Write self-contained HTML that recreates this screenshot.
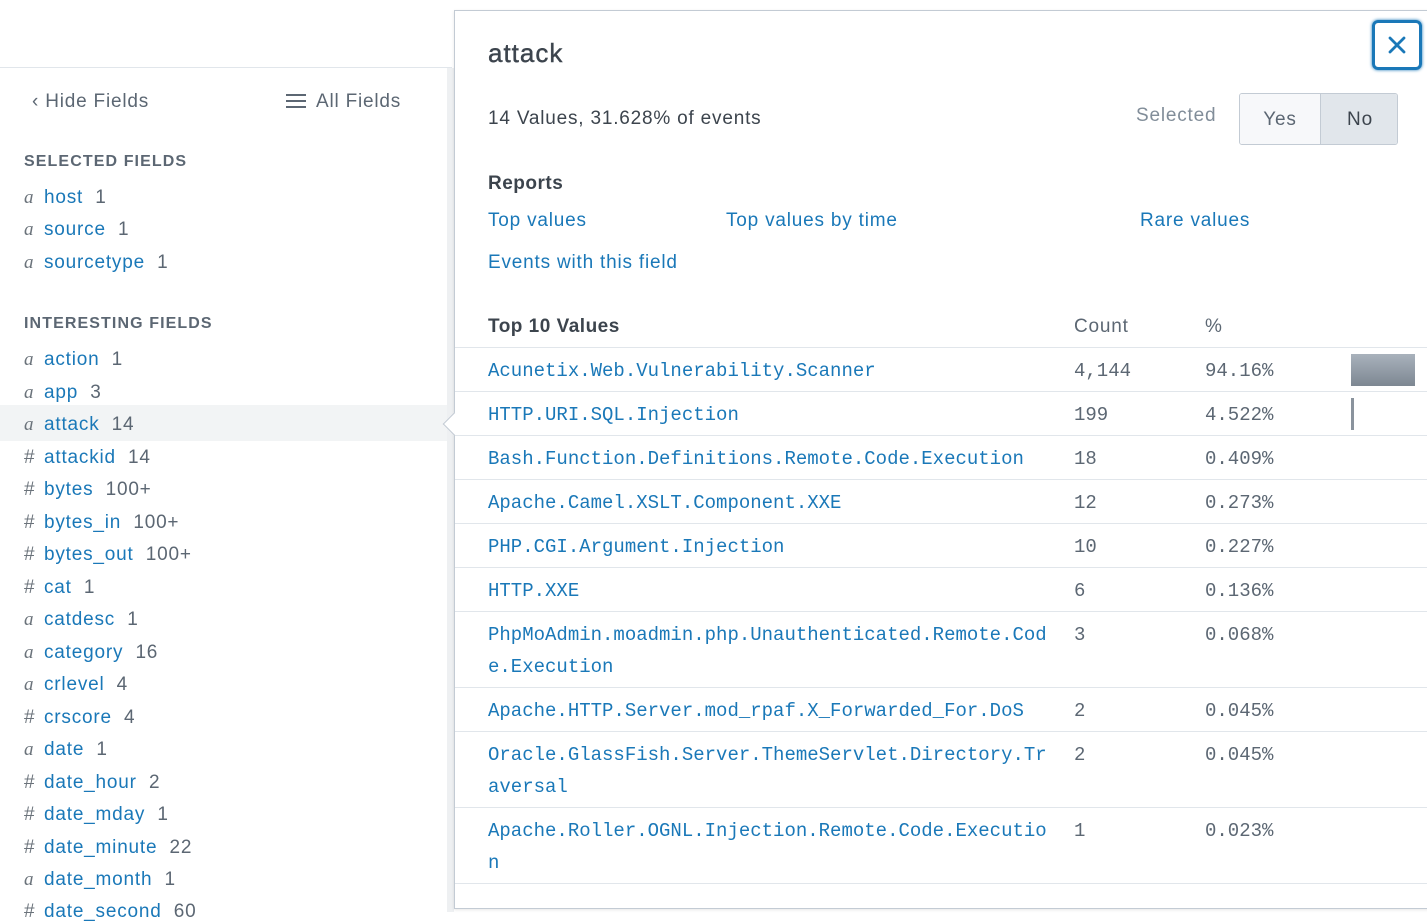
<!DOCTYPE html>
<html><head><meta charset="utf-8"><style>
*{margin:0;padding:0;box-sizing:border-box}
body{width:1427px;height:912px;overflow:hidden;background:#fff;font-family:"Liberation Sans",sans-serif;position:relative;color:#3c444d;letter-spacing:0.8px}
.a{position:absolute;white-space:nowrap}
.topline{position:absolute;left:0;top:67px;width:452px;height:1px;background:#e1e6eb}
.strip{position:absolute;left:447px;top:68px;width:7px;height:844px;background:#eef0f2}
.lnk{color:#1a78b8}
.L{position:absolute;left:0;top:3px;width:447px;height:912px}
.fld{position:absolute;left:24px;font-size:19px;white-space:nowrap;color:#5c6773}
.fld i{font-family:"Liberation Serif",serif;font-style:italic;color:#6b737b;display:inline-block;width:20px}
.fld i.h{font-family:"Liberation Sans",sans-serif;font-style:normal}
.fld b{font-weight:normal;color:#1a78b8}
.hdr{position:absolute;left:24px;font-size:16px;font-weight:bold;color:#5c6773;letter-spacing:1.1px}
.panel{position:absolute;left:454px;top:10px;width:990px;height:899px;border:1px solid #c3cbd4;background:#fff;box-shadow:0 1px 3px rgba(0,0,0,.1)}
.mono{font-family:"Liberation Mono",monospace;font-size:19px;color:#5c6773;letter-spacing:0}
.row{position:absolute;left:0;width:990px;border-top:1px solid #e1e6eb}
.val{position:absolute;left:33px;top:7px;width:562px;white-space:normal;word-break:break-all;line-height:32px;color:#1a78b8}
.cnt{position:absolute;left:619px;top:7px;line-height:32px}
.pct{position:absolute;left:750px;top:7px;line-height:32px}
</style></head><body>
<div class="topline"></div>
<div class="strip"></div>
<div style="position:absolute;left:0;top:405px;width:447px;height:36px;background:#f2f4f5"></div>
<div class="L">
<div class="a" style="left:32px;top:88px;font-size:19px;color:#5c6773">&#8249; Hide Fields</div>
<div class="a" style="left:286px;top:88px;font-size:19px;color:#5c6773"><span style="display:inline-block;width:20px;height:14px;vertical-align:-1px;background:linear-gradient(#5c6773 0 2px,transparent 2px 6px,#5c6773 6px 8px,transparent 8px 12px,#5c6773 12px 14px);margin-right:10px"></span>All Fields</div>
<div class="hdr" style="top:150px">SELECTED FIELDS</div>
<div class="fld" style="top:184px"><i>a</i><b>host</b>&nbsp; 1</div>
<div class="fld" style="top:216px"><i>a</i><b>source</b>&nbsp; 1</div>
<div class="fld" style="top:249px"><i>a</i><b>sourcetype</b>&nbsp; 1</div>
<div class="hdr" style="top:312px">INTERESTING FIELDS</div>
<div class="fld" style="top:346px"><i>a</i><b>action</b>&nbsp; 1</div>
<div class="fld" style="top:379px"><i>a</i><b>app</b>&nbsp; 3</div>
<div class="fld" style="top:411px"><i>a</i><b>attack</b>&nbsp; 14</div>
<div class="fld" style="top:444px"><i class="h">#</i><b>attackid</b>&nbsp; 14</div>
<div class="fld" style="top:476px"><i class="h">#</i><b>bytes</b>&nbsp; 100+</div>
<div class="fld" style="top:509px"><i class="h">#</i><b>bytes_in</b>&nbsp; 100+</div>
<div class="fld" style="top:541px"><i class="h">#</i><b>bytes_out</b>&nbsp; 100+</div>
<div class="fld" style="top:574px"><i class="h">#</i><b>cat</b>&nbsp; 1</div>
<div class="fld" style="top:606px"><i>a</i><b>catdesc</b>&nbsp; 1</div>
<div class="fld" style="top:639px"><i>a</i><b>category</b>&nbsp; 16</div>
<div class="fld" style="top:671px"><i>a</i><b>crlevel</b>&nbsp; 4</div>
<div class="fld" style="top:704px"><i class="h">#</i><b>crscore</b>&nbsp; 4</div>
<div class="fld" style="top:736px"><i>a</i><b>date</b>&nbsp; 1</div>
<div class="fld" style="top:769px"><i class="h">#</i><b>date_hour</b>&nbsp; 2</div>
<div class="fld" style="top:801px"><i class="h">#</i><b>date_mday</b>&nbsp; 1</div>
<div class="fld" style="top:834px"><i class="h">#</i><b>date_minute</b>&nbsp; 22</div>
<div class="fld" style="top:866px"><i>a</i><b>date_month</b>&nbsp; 1</div>
<div class="fld" style="top:898px"><i class="h">#</i><b>date_second</b>&nbsp; 60</div>
</div>

<div class="panel">
 <div style="position:absolute;left:-9px;top:405px;width:16px;height:16px;background:#fff;border-left:1px solid #c3cbd4;border-bottom:1px solid #c3cbd4;transform:rotate(45deg)"></div>
 <div class="a" style="left:33px;top:27px;font-size:26px;color:#3c444d;letter-spacing:1px;-webkit-text-stroke:0.4px #3c444d">attack</div>
 <div style="position:absolute;left:917px;top:9px;width:50px;height:50px;border:3px solid #1a78b8;border-radius:6px;box-shadow:0 0 3px #1a78b8"><svg width="44" height="44" viewBox="0 0 44 44" style="position:absolute;left:0;top:0"><path d="M15 15L29 29M29 15L15 29" stroke="#1a78b8" stroke-width="2.8" stroke-linecap="round"/></svg></div>
 <div class="a" style="left:33px;top:97px;font-size:19px;color:#3c444d">14 Values, 31.628% of events</div>
 <div class="a" style="left:681px;top:94px;font-size:19px;color:#818d99">Selected</div>
 <div style="position:absolute;left:784px;top:82px;width:159px;height:52px;border:1px solid #c3cbd4;border-radius:3px;overflow:hidden;font-size:19px">
  <div style="position:absolute;left:0;top:0;width:81px;height:50px;background:#f7f8fa;border-right:1px solid #c3cbd4;text-align:center;line-height:52px;color:#5c6773">Yes</div>
  <div style="position:absolute;left:81px;top:0;width:78px;height:50px;background:#e1e6eb;text-align:center;line-height:52px;color:#3c444d">No</div>
 </div>
 <div class="a" style="left:33px;top:162px;font-size:19px;font-weight:bold;color:#3c444d;letter-spacing:0.5px">Reports</div>
 <div class="a lnk" style="left:33px;top:199px;font-size:19px">Top values</div>
 <div class="a lnk" style="left:271px;top:199px;font-size:19px">Top values by time</div>
 <div class="a lnk" style="left:685px;top:199px;font-size:19px">Rare values</div>
 <div class="a lnk" style="left:33px;top:241px;font-size:19px">Events with this field</div>
 <div class="a" style="left:33px;top:305px;font-size:19px;font-weight:bold;color:#3c444d;letter-spacing:0.5px">Top 10 Values</div>
 <div class="a" style="left:619px;top:305px;font-size:19px;color:#5c6773">Count</div>
 <div class="a" style="left:750px;top:305px;font-size:19px;color:#5c6773">%</div>
 <div class="mono">
 <div class="row" style="top:336px;height:44px"><div class="val">Acunetix.Web.Vulnerability.Scanner</div><div class="cnt">4,144</div><div class="pct">94.16%</div><div style="position:absolute;left:896px;top:6px;width:64px;height:32px;background:linear-gradient(#a9b2bc,#7d8792)"></div></div>
 <div class="row" style="top:380px;height:44px"><div class="val">HTTP.URI.SQL.Injection</div><div class="cnt">199</div><div class="pct">4.522%</div><div style="position:absolute;left:896px;top:6px;width:3px;height:32px;background:#8a939d"></div></div>
 <div class="row" style="top:424px;height:44px"><div class="val">Bash.Function.Definitions.Remote.Code.Execution</div><div class="cnt">18</div><div class="pct">0.409%</div></div>
 <div class="row" style="top:468px;height:44px"><div class="val">Apache.Camel.XSLT.Component.XXE</div><div class="cnt">12</div><div class="pct">0.273%</div></div>
 <div class="row" style="top:512px;height:44px"><div class="val">PHP.CGI.Argument.Injection</div><div class="cnt">10</div><div class="pct">0.227%</div></div>
 <div class="row" style="top:556px;height:44px"><div class="val">HTTP.XXE</div><div class="cnt">6</div><div class="pct">0.136%</div></div>
 <div class="row" style="top:600px;height:76px"><div class="val">PhpMoAdmin.moadmin.php.Unauthenticated.Remote.Cod<br>e.Execution</div><div class="cnt">3</div><div class="pct">0.068%</div></div>
 <div class="row" style="top:676px;height:44px"><div class="val">Apache.HTTP.Server.mod_rpaf.X_Forwarded_For.DoS</div><div class="cnt">2</div><div class="pct">0.045%</div></div>
 <div class="row" style="top:720px;height:76px"><div class="val">Oracle.GlassFish.Server.ThemeServlet.Directory.Tr<br>aversal</div><div class="cnt">2</div><div class="pct">0.045%</div></div>
 <div class="row" style="top:796px;height:76px"><div class="val">Apache.Roller.OGNL.Injection.Remote.Code.Executio<br>n</div><div class="cnt">1</div><div class="pct">0.023%</div></div>
 <div class="row" style="top:872px;height:30px"></div>
 </div>
</div>
</body></html>
